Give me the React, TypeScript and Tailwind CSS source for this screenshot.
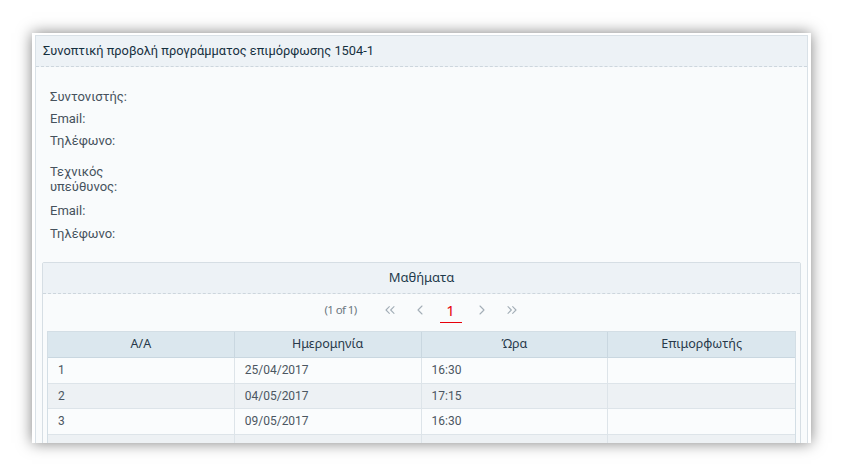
import React from "react";
import { ChevronsLeft, ChevronLeft, ChevronRight, ChevronsRight } from "lucide-react";

const rows = [
  { n: "1", d: "25/04/2017", t: "16:30" },
  { n: "2", d: "04/05/2017", t: "17:15" },
  { n: "3", d: "09/05/2017", t: "16:30" },
  { n: "", d: "", t: "" },
];

export default function App() {
  return (
    <div className="w-[843px] h-[475px] bg-white overflow-hidden pt-[33px] pl-[32px]" style={{ fontFamily: "Roboto, 'Noto Sans', sans-serif" }}>
      <div className="w-[779px] h-[410px] bg-white overflow-hidden shadow-[0_0_14px_rgba(0,0,0,0.5)] pt-[2px] px-[3px]">
        <div className="h-[420px] border border-[#d9e1e7] bg-[#f9fbfc]">
          <div className="h-[31px] bg-[#edf2f6] border-b border-dashed border-[#cdd6dd] flex items-center pl-[7px] text-[12.8px] text-[#15303f]">
            Συνοπτική προβολή προγράμματος επιμόρφωσης 1504-1
          </div>
          <div className="px-[6px]">
            <div className="pl-[8px] text-[13px] text-[#46525d] pt-[19px]">
              <div className="h-[22px] leading-[22px]">Συντονιστής:</div>
              <div className="h-[22px] leading-[22px]">Email:</div>
              <div className="h-[22px] leading-[22px]">Τηλέφωνο:</div>
              <div className="mt-[12px] w-[80px] leading-[15px]">Τεχνικός υπεύθυνος:</div>
              <div className="mt-[6px] h-[23px] leading-[22px]">Email:</div>
              <div className="h-[22px] leading-[22px]">Τηλέφωνο:</div>
            </div>
            <div className="mt-[17px] border border-[#d6dee4] rounded-[2px] bg-[#f9fbfc]">
              <div className="h-[31px] bg-[#edf2f6] border-b border-dashed border-[#cdd6dd] flex items-center justify-center text-[13px] text-[#1e3a4c]" style={{ fontFamily: "'Noto Sans', sans-serif" }}>
                Μαθήματα
              </div>
              <div className="h-[37px] pb-[5px] flex items-center justify-center text-[#a3aeb7] pl-[8px]" style={{ fontFamily: "'Noto Sans', sans-serif" }}>
                <span className="text-[11.5px] text-[#6b7780] mr-[18px] tracking-[-0.6px]">(1 of 1)</span>
                <span className="w-[30px] flex justify-center"><ChevronsLeft size={16} strokeWidth={1.6} /></span>
                <span className="w-[30px] flex justify-center"><ChevronLeft size={16} strokeWidth={1.6} /></span>
                <span className="relative w-[32px] flex justify-center">
                  <span className="text-[15px] leading-[18px] text-red-600">1</span>
                  <span className="absolute left-[5px] right-[5px] bottom-[-4px] h-[1px] bg-red-600" />
                </span>
                <span className="w-[30px] flex justify-center"><ChevronRight size={16} strokeWidth={1.6} /></span>
                <span className="w-[30px] flex justify-center"><ChevronsRight size={16} strokeWidth={1.6} /></span>
              </div>
              <div className="mx-[4px] border border-[#d3dee5] border-b-0">
                <div className="grid grid-cols-4 h-[26px] bg-[#dbe7ee] text-[12.5px] text-[#27394a] border-b border-[#c9d7e0]" style={{ fontFamily: "'Noto Sans', sans-serif" }}>
                  <div className="flex items-center justify-center border-r border-[#c9d7e0]">Α/Α</div>
                  <div className="flex items-center justify-center border-r border-[#c9d7e0]">Ημερομηνία</div>
                  <div className="flex items-center justify-center border-r border-[#c9d7e0]">Ώρα</div>
                  <div className="flex items-center justify-center">Επιμορφωτής</div>
                </div>
                {rows.map((r, i) => (
                  <div key={i} className={`grid grid-cols-4 h-[25.5px] text-[12px] text-[#4b5661] border-b border-[#dde4e9] ${i % 2 === 1 ? "bg-[#edf1f4]" : "bg-[#fafcfd]"}`}>
                    <div className="flex items-center pl-[10px] border-r border-[#dde4e9]">{r.n}</div>
                    <div className="flex items-center pl-[10px] border-r border-[#dde4e9]">{r.d}</div>
                    <div className="flex items-center pl-[10px] border-r border-[#dde4e9]">{r.t}</div>
                    <div className="flex items-center pl-[10px]"></div>
                  </div>
                ))}
              </div>
            </div>
          </div>
        </div>
      </div>
    </div>
  );
}
